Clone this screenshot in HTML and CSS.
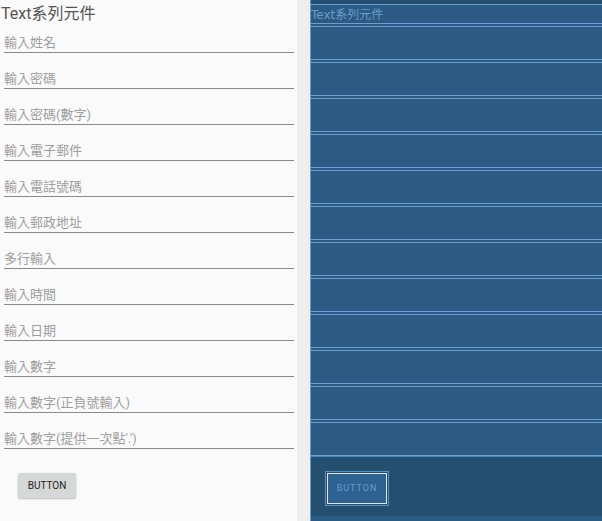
FILE: index.html
```html
<!DOCTYPE html>
<html lang="zh-Hant">
<head>
    <meta charset="UTF-8">
    <title>Text系列元件</title>
    <link rel="stylesheet" href="styles.css">
</head>
<body>
    <div class="editor">
        <!-- 設計預覽 -->
        <div class="design">
            <div class="title">Text系列元件</div>
            <div class="field"><span>輸入姓名</span></div>
            <div class="field"><span>輸入密碼</span></div>
            <div class="field"><span>輸入密碼(數字)</span></div>
            <div class="field"><span>輸入電子郵件</span></div>
            <div class="field"><span>輸入電話號碼</span></div>
            <div class="field"><span>輸入郵政地址</span></div>
            <div class="field"><span>多行輸入</span></div>
            <div class="field"><span>輸入時間</span></div>
            <div class="field"><span>輸入日期</span></div>
            <div class="field"><span>輸入數字</span></div>
            <div class="field"><span>輸入數字(正負號輸入)</span></div>
            <div class="field"><span>輸入數字(提供一次點'.')</span></div>
            <div class="btn-row"><div class="button">BUTTON</div></div>
        </div>

        <div class="gutter"></div>

        <!-- 藍圖 -->
        <div class="blueprint">
            <div class="bp-title">Text系列元件</div>
            <div class="bp-row"></div>
            <div class="bp-row"></div>
            <div class="bp-row"></div>
            <div class="bp-row"></div>
            <div class="bp-row"></div>
            <div class="bp-row"></div>
            <div class="bp-row"></div>
            <div class="bp-row"></div>
            <div class="bp-row"></div>
            <div class="bp-row"></div>
            <div class="bp-row"></div>
            <div class="bp-row"></div>
            <div class="bp-bottom">
                <div class="bp-button"><div class="bp-button-in">BUTTON</div></div>
            </div>
        </div>
    </div>
</body>
</html>
```

FILE: styles.css
```css
body {
    margin: 0;
    padding: 0;
    font-family: Roboto, "Noto Sans CJK TC", sans-serif;
    background-color: #eeeeee;
}
.editor {
    display: flex;
    width: 602px;
    height: 521px;
    overflow: hidden;
}
.design {
    width: 297px;
    background-color: #fafafa;
}
.title {
    height: 26px;
    line-height: 28px;
    padding-left: 1px;
    font-size: 16px;
    color: #555555;
}
.field {
    height: 36px;
    padding: 0 3px 0 4px;
    box-sizing: border-box;
}
.field span {
    display: block;
    height: 26px;
    line-height: 34px;
    font-size: 13px;
    color: #9e9e9e;
    border-bottom: 1px solid #8a8a8a;
    white-space: nowrap;
}
.btn-row {
    padding: 15px 0 0 18px;
}
.button {
    width: 58px;
    height: 25px;
    line-height: 25px;
    text-align: center;
    font-size: 10px;
    color: #222;
    background-color: #d6d7d7;
    border-radius: 2px;
    box-shadow: 0 1px 2px rgba(0,0,0,0.25);
}
.gutter {
    width: 13px;
    background-color: #eeeeee;
}
.blueprint {
    flex: 1;
    background-color: #2b5b84;
    border-left: 1px solid #6b9fd0;
    padding-top: 4px;
    box-shadow: inset 0 4px 0 #244e72;
}
.bp-title {
    height: 20px;
    line-height: 20px;
    font-family: "DejaVu Sans", "Noto Sans CJK TC", sans-serif;
    font-size: 12px;
    color: #6a9bcb;
    border-top: 1px solid #6b9fd0;
    border-bottom: 1px solid #6b9fd0;
    box-sizing: border-box;
    margin-bottom: 2px;
    white-space: nowrap;
}
.bp-row {
    height: 34px;
    border-top: 1px solid #6b9fd0;
    border-bottom: 1px solid #6b9fd0;
    box-sizing: border-box;
    margin-bottom: 2px;
}
.bp-bottom {
    height: 60px;
    margin-top: -2px;
    background-color: #234f71;
    border-top: 1px solid #4f83b3;
    padding: 14px 0 0 14px;
    box-sizing: border-box;
}
.bp-button {
    width: 64px;
    height: 35px;
    border: 1px solid #5b8fc0;
    box-sizing: border-box;
    padding: 1px;
}
.bp-button-in {
    height: 100%;
    box-sizing: border-box;
    border: 1px solid #dfe8f2;
    background-color: #2e6290;
    color: #6a9bcb;
    font-size: 9px;
    letter-spacing: 1px;
    text-align: center;
    line-height: 29px;
}
```
